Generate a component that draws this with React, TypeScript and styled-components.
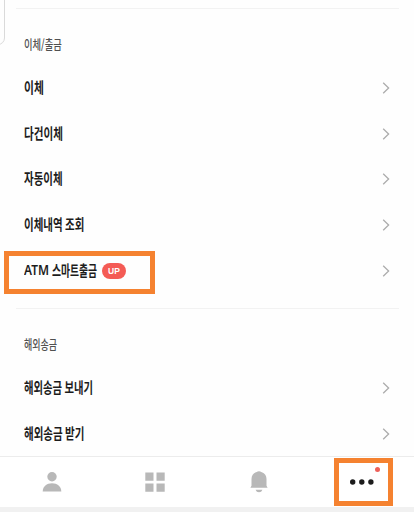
import React from 'react';
import styled, { createGlobalStyle } from 'styled-components';

const GlobalStyle = createGlobalStyle`
  *, *::before, *::after { box-sizing: border-box; }
  body { margin: 0; background: #fff; font-family: 'Noto Sans CJK KR', 'Noto Sans', sans-serif; overflow: hidden; }
`;

const Screen = styled.div`
  position: relative;
  height: 512px;
  display: flex;
  flex-direction: column;
  overflow: hidden;
  background: #fefefe;
`;

const CardEdge = styled.div`
  position: absolute;
  left: -20px;
  top: -20px;
  width: 25px;
  height: 65px;
  border: 1.5px solid #dadada;
  border-radius: 7px;
`;

const Content = styled.main`
  height: 456px;
  padding-top: 8px;
  flex: none;
`;

const Section = styled.section`
  height: 300px;
  margin: 0 15px 0 16px;
  padding-left: 8px;
  border-top: 1px solid #f2f2f2;
`;

const SectionTitle = styled.h2`
  display: flex;
  align-items: center;
  height: 56px;
  margin: 0;
  padding-top: 14px;
  color: #505050;
  font-size: 12px;
  font-weight: 500;
`;

const Row = styled.div`
  display: flex;
  align-items: center;
  height: 45.75px;
  padding-right: 9px;
`;

const Condensed = styled.span<{ $width: number; $scale: number }>`
  display: block;
  width: ${({ $width }) => $width}px;
  line-height: 20px;
  white-space: nowrap;
  transform: scale(${({ $scale }) => $scale}, 1.08);
  transform-origin: left center;
`;

const ItemLabel = styled.div`
  display: flex;
  flex: 1;
  align-items: center;
  color: #1c1c1c;
  font-size: 14px;
  font-weight: 700;

  & > ${Condensed} {
    margin-top: -2px;
  }
`;

const Latin = styled.span`
  width: 28px;
  margin-top: -1px;
  font-family: 'Noto Sans', sans-serif;
  font-size: 14px;
  font-weight: 600;
  line-height: 20px;
  white-space: nowrap;
  transform: scaleX(0.85);
  transform-origin: left center;
`;

const Badge = styled.span`
  display: flex;
  align-items: center;
  justify-content: center;
  width: 24px;
  height: 16px;
  margin-left: 5px;
  border-radius: 8px;
  background: #f45b55;
  color: #fff;
  font: 700 8.5px/16px 'Liberation Sans', sans-serif;
`;

const Chevron = styled.svg`
  width: 8px;
  height: 14px;
  fill: none;
  stroke: #acacac;
  stroke-width: 1.3;
`;

const TabBar = styled.nav`
  display: grid;
  grid-template-columns: repeat(4, 1fr);
  height: 51px;
  flex: none;
  border-top: 1px solid #ececec;
  background: #fff;
`;

const Tab = styled.div`
  display: flex;
  align-items: center;
  justify-content: center;
  color: #b8b8b8;
`;

const TabIcon = styled.svg`
  width: 24px;
  height: 24px;
  fill: currentColor;
`;

const MoreIcon = styled.svg`
  width: 36px;
  height: 36px;
`;

const SystemEdge = styled.div`
  flex: 1;
  background: #f1f1f1;
`;

const Highlight = styled.div<{ $x: number; $y: number; $w: number; $h: number }>`
  position: absolute;
  left: ${({ $x }) => $x}px;
  top: ${({ $y }) => $y}px;
  width: ${({ $w }) => $w}px;
  height: ${({ $h }) => $h}px;
  border: 5px solid #f58230;
`;

type Item = { text: string; width: number; scale: number; latin?: string; badge?: string };

const groups: { title: string; width: number; scale: number; items: Item[] }[] = [
  {
    title: '이체/출금',
    width: 38,
    scale: 0.775,
    items: [
      { text: '이체', width: 20, scale: 0.77 },
      { text: '다건이체', width: 39, scale: 0.755 },
      { text: '자동이체', width: 39, scale: 0.75 },
      { text: '이체내역 조회', width: 60, scale: 0.75 },
      { latin: 'ATM', text: '스마트출금', width: 45, scale: 0.7, badge: 'UP' },
    ],
  },
  {
    title: '해외송금',
    width: 33,
    scale: 0.75,
    items: [
      { text: '해외송금 보내기', width: 69, scale: 0.74 },
      { text: '해외송금 받기', width: 60, scale: 0.75 },
    ],
  },
];

export default function App() {
  return (
    <>
      <GlobalStyle />
      <Screen>
        <CardEdge />
        <Content>
          {groups.map((group) => (
            <Section key={group.title}>
              <SectionTitle>
                <Condensed $width={group.width} $scale={group.scale}>{group.title}</Condensed>
              </SectionTitle>
              {group.items.map((item) => (
                <Row key={item.text}>
                  <ItemLabel>
                    {item.latin && <Latin>{item.latin}</Latin>}
                    <Condensed $width={item.width} $scale={item.scale}>{item.text}</Condensed>
                    {item.badge && <Badge>{item.badge}</Badge>}
                  </ItemLabel>
                  <Chevron viewBox="0 0 8 14">
                    <path d="M1.2 1.8 6.6 7 1.2 12.2" />
                  </Chevron>
                </Row>
              ))}
            </Section>
          ))}
        </Content>
        <TabBar>
          <Tab>
            <TabIcon viewBox="0 0 24 24">
              <circle cx="12" cy="6.7" r="4.7" />
              <path d="M2.7 21.5c0-5.2 4-8.3 9.3-8.3s9.3 3.1 9.3 8.3z" />
            </TabIcon>
          </Tab>
          <Tab>
            <TabIcon viewBox="0 0 24 24">
              <path d="M2.3 2.5h8.2v8.2H2.3zM13.5 2.5h8.2v8.2h-8.2zM2.3 13.5h8.2v8.2H2.3zM13.5 13.5h8.2v8.2h-8.2z" />
            </TabIcon>
          </Tab>
          <Tab>
            <TabIcon viewBox="0 0 24 24">
              <path d="M12 1.2c1 0 1.8.3 2.2.9 3.3.8 5.3 3.5 5.3 7v6.6l1.1 2.1H3.4l1.1-2.1V9.1c0-3.5 2-6.2 5.3-7 .4-.6 1.2-.9 2.2-.9zM8.6 19.7h6.8c-.6 1.7-1.8 2.5-3.4 2.5s-2.8-.8-3.4-2.5z" />
            </TabIcon>
          </Tab>
          <Tab>
            <MoreIcon viewBox="0 0 36 36">
              <g fill="#1c1c1c">
                <circle cx="8.7" cy="18" r="2.7" />
                <circle cx="17.8" cy="18" r="2.7" />
                <circle cx="26.9" cy="18" r="2.7" />
              </g>
              <circle cx="33.5" cy="5.5" r="2.5" fill="#ee6059" />
            </MoreIcon>
          </Tab>
        </TabBar>
        <SystemEdge />
        <Highlight $x={4} $y={251} $w={151} $h={43} />
        <Highlight $x={334} $y={458} $w={59} $h={48} />
      </Screen>
    </>
  );
}
